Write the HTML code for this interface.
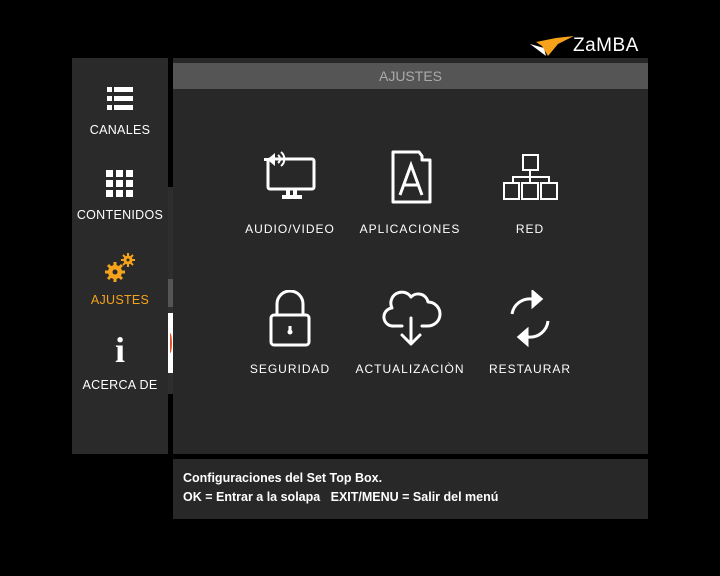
<!DOCTYPE html><html><head><style>
body{margin:0;width:720px;height:576px;background:#000;position:relative;overflow:hidden;font-family:"Liberation Sans","DejaVu Sans",sans-serif;color:#fff}
.a{position:absolute}
.lbl{position:absolute;font-size:12px;letter-spacing:1px;text-align:center;width:120px}
.sl{position:absolute;left:72px;width:96px;text-align:center;font-size:12.5px;letter-spacing:.3px}
</style></head><body>
<div class="a" style="left:72px;top:58px;width:96px;height:396px;background:#2a2a2a"></div>
<div class="a" style="left:168px;top:187px;width:5px;height:207px;background:#2e2e2e"></div>
<div class="a" style="left:168px;top:279px;width:5px;height:28px;background:#555"></div>
<div class="a" style="left:168px;top:313px;width:5px;height:60px;background:#fff"></div>
<div class="a" style="left:168px;top:333px;width:4px;height:20px;border-right:2px solid #e85020;border-radius:0 50% 50% 0;box-sizing:border-box"></div>
<div class="a" style="left:173px;top:58px;width:475px;height:396px;background:#282828"></div>
<div class="a" style="left:173px;top:63px;width:475px;height:26px;background:#555;color:#aaa;font-size:14px;text-align:center;line-height:26px">AJUSTES</div>
<div class="a" style="left:173px;top:459px;width:475px;height:60px;background:#282828;font-size:12.5px;font-weight:bold;line-height:19px;padding:10px 0 0 10px;box-sizing:border-box">Configuraciones del Set Top Box.<br>OK = Entrar a la solapa &nbsp; EXIT/MENU = Salir del menú</div>
<!-- logo -->
<svg class="a" style="left:528px;top:36px" width="50" height="22"><polygon points="2,8 18,20 16,12" fill="#fff"/><polygon points="8,6 28,2 46,0 30,8 20,20 14,10" fill="#f7a21b"/></svg>
<div class="a" style="left:573px;top:35px;font-size:19px;letter-spacing:.5px">ZaMBA</div>
<!-- sidebar icons -->
<svg class="a" style="left:107px;top:86px" width="26" height="26" fill="#fff"><rect x="0" y="1" width="5" height="5"/><rect x="7" y="1" width="19" height="5"/><rect x="0" y="10" width="5" height="5"/><rect x="7" y="10" width="19" height="5"/><rect x="0" y="19" width="5" height="5"/><rect x="7" y="19" width="19" height="5"/></svg>
<div class="sl" style="top:123px">CANALES</div>
<svg class="a" style="left:106px;top:170px" width="28" height="28" fill="#fff"><rect x="0" y="0" width="7" height="7"/><rect x="10" y="0" width="7" height="7"/><rect x="20" y="0" width="7" height="7"/><rect x="0" y="10" width="7" height="7"/><rect x="10" y="10" width="7" height="7"/><rect x="20" y="10" width="7" height="7"/><rect x="0" y="20" width="7" height="7"/><rect x="10" y="20" width="7" height="7"/><rect x="20" y="20" width="7" height="7"/></svg>
<div class="sl" style="top:208px">CONTENIDOS</div>
<svg class="a" style="left:104px;top:252px" width="32" height="32" fill="#f7a21b"><circle cx="11" cy="20" r="7"/><g stroke="#f7a21b" stroke-width="3"><line x1="11" y1="10" x2="11" y2="30"/><line x1="1" y1="20" x2="21" y2="20"/><line x1="4" y1="13" x2="18" y2="27"/><line x1="18" y1="13" x2="4" y2="27"/></g><circle cx="11" cy="20" r="2.5" fill="#2a2a2a"/><circle cx="24" cy="8" r="4.5"/><g stroke="#f7a21b" stroke-width="2"><line x1="24" y1="1" x2="24" y2="15"/><line x1="17" y1="8" x2="31" y2="8"/><line x1="19" y1="3" x2="29" y2="13"/><line x1="29" y1="3" x2="19" y2="13"/></g><circle cx="24" cy="8" r="1.5" fill="#2a2a2a"/></svg>
<div class="sl" style="top:293px;color:#f7a21b">AJUSTES</div>
<div class="a" style="left:72px;width:96px;top:330px;text-align:center;font-family:'Liberation Serif',serif;font-weight:bold;font-size:36px;line-height:40px">i</div>
<div class="sl" style="top:378px">ACERCA DE</div>
<!-- main icons -->
<svg class="a" style="left:262px;top:150px" width="56" height="56" fill="none" stroke="#fff" stroke-width="3"><rect x="6" y="9" width="46" height="30" rx="2"/><path d="M2 8h5l6-5v13l-6-5H2z" fill="#fff" stroke="none"/><path d="M16 5a5 5 0 0 1 0 8M19 2a9 9 0 0 1 0 14" stroke-width="2"/><path d="M26 39v7M33 39v7M20 47h20" stroke-width="4"/></svg>
<div class="lbl" style="left:230px;top:222px">AUDIO/VIDEO</div>
<svg class="a" style="left:388px;top:150px" width="46" height="56" fill="none" stroke="#fff" stroke-width="3"><path d="M5 2h26l3 4v4h8v42H5z" stroke-linejoin="round"/><path d="M12 45l11-30 11 30M16 35h14"/></svg>
<div class="lbl" style="left:350px;top:222px">APLICACIONES</div>
<svg class="a" style="left:502px;top:154px" width="58" height="48" fill="none" stroke="#fff" stroke-width="2"><rect x="21" y="1" width="15" height="15"/><path d="M28 16v6M11 29v-6h36v6M28 22v7"/><rect x="2" y="29" width="15" height="16"/><rect x="20" y="29" width="16" height="16"/><rect x="39" y="29" width="16" height="16"/></svg>
<div class="lbl" style="left:470px;top:222px">RED</div>
<svg class="a" style="left:268px;top:290px" width="44" height="58" fill="none" stroke="#fff" stroke-width="3"><path d="M9 25V14a13 13 0 0 1 26 0v11"/><rect x="3" y="25" width="38" height="30" rx="3"/><circle cx="22" cy="42" r="2.5" fill="#fff" stroke="none"/><path d="M22 36v6"/></svg>
<div class="lbl" style="left:230px;top:362px">SEGURIDAD</div>
<svg class="a" style="left:382px;top:290px" width="60" height="58" fill="none" stroke="#fff" stroke-width="3" stroke-linejoin="round" stroke-linecap="round"><path d="M20 36h-8a9 9 0 0 1-2-18a11 11 0 0 1 19-11a10 10 0 0 1 17 5a11 11 0 0 1 0 24h-6"/><path d="M29 28v26M20 45l9 9 9-9"/></svg>
<div class="lbl" style="left:350px;top:362px">ACTUALIZACIÒN</div>
<svg class="a" style="left:506px;top:290px" width="48" height="58" fill="none" stroke="#fff" stroke-width="3"><path d="M6 24a18 18 0 0 1 20-15"/><path d="M27 2l8 7-8 7z" fill="#fff"/><path d="M42 31a18 18 0 0 1-20 16"/><path d="M21 40l-8 7 8 7z" fill="#fff"/></svg>
<div class="lbl" style="left:470px;top:362px">RESTAURAR</div>
</body></html>
